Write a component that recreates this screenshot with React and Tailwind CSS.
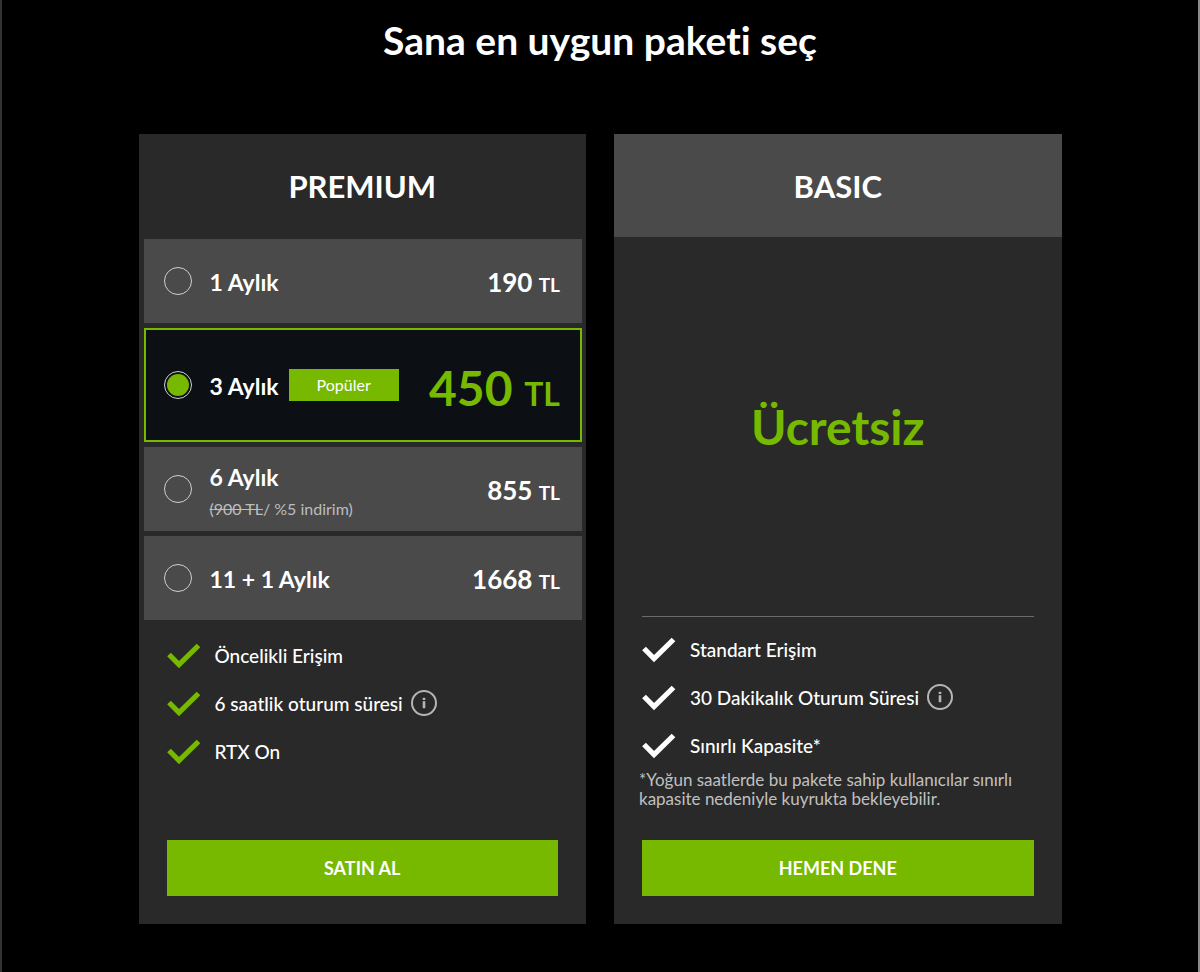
import { useState } from "react";

const plans = [
  { id: "m1", label: "1 Aylık", price: "190" },
  { id: "m3", label: "3 Aylık", price: "450", badge: "Popüler" },
  { id: "m6", label: "6 Aylık", price: "855", oldPrice: "900 TL", discount: "%5 indirim" },
  { id: "m12", label: "11 + 1 Aylık", price: "1668" },
];

function CheckIcon({ className }) {
  return (
    <svg viewBox="0 0 34 26" className={"h-[26px] w-[34px] shrink-0 " + className} aria-hidden="true">
      <path d="M2 11.5 L12 21.5 L31.5 2.5" fill="none" stroke="currentColor" strokeWidth="5.2" />
    </svg>
  );
}

function InfoButton() {
  return (
    <button type="button" aria-label="Bilgi" className="ml-2 shrink-0 text-[#b5b5b5]">
      <svg viewBox="0 0 28 28" className="block size-7" aria-hidden="true">
        <circle cx="13" cy="13" r="12" fill="none" stroke="currentColor" strokeWidth="2" />
        <rect x="11.7" y="7.8" width="2.6" height="2.2" fill="currentColor" />
        <rect x="11.7" y="11.2" width="2.6" height="7" fill="currentColor" />
      </svg>
    </button>
  );
}

function Feature({ children, info, tone }) {
  return (
    <li className="flex h-12 items-center">
      <CheckIcon className={tone} />
      <span className="ml-[14px] text-[19px] leading-6 font-medium text-white">{children}</span>
      {info && <InfoButton />}
    </li>
  );
}

function PlanOption({ plan, selected, onSelect }) {
  return (
    <label
      className={
        "flex cursor-pointer items-center pr-[22px] pl-5 " +
        (selected ? "h-[114px] bg-[#0c1015] outline-2 -outline-offset-2 outline-[#76b900]" : "h-[84px] bg-[#4a4a4a]")
      }
    >
      <input
        type="radio"
        name="plan"
        checked={selected}
        onChange={onSelect}
        className="size-7 shrink-0 appearance-none rounded-full border border-[#cfcfcf] bg-clip-content p-[2px] checked:bg-[#76b900]"
      />
      <span className={"ml-[18px] flex flex-col " + (plan.oldPrice ? "pt-2" : "pt-px")}>
        <span className="text-[23px] leading-8 font-bold text-white">{plan.label}</span>
        {plan.oldPrice && (
          <span className="text-[16px] leading-8 text-[#bdbdbd]">
            <s>({plan.oldPrice}</s>/ {plan.discount})
          </span>
        )}
      </span>
      {plan.badge && (
        <span className="ml-[10px] bg-[#76b900] px-7 py-1 text-[16px] leading-6 text-white">{plan.badge}</span>
      )}
      <span
        className={
          "ml-auto font-bold whitespace-nowrap " +
          (selected ? "pt-3 text-[48px] leading-[60px] text-[#76b900]" : "pt-1 text-[26px] leading-8 text-white")
        }
      >
        {plan.price} <span className={selected ? "text-[32px]" : "text-[19px]"}>TL</span>
      </span>
    </label>
  );
}

function ActionButton({ children }) {
  return (
    <div className="mt-auto px-7 pb-7">
      <button type="button" className="h-14 w-full bg-[#76b900] text-[18px] font-bold text-white">
        {children}
      </button>
    </div>
  );
}

export default function App() {
  const [selected, setSelected] = useState("m3");
  return (
    <div className="min-h-screen border-r-2 border-l-2 border-r-[#8a8a8a] border-l-[#333333] bg-black pb-12 font-['Lato',sans-serif] [font-variant-ligatures:none]">
      <h1 className="pt-4 text-center text-[39px] leading-[48px] font-bold text-white">Sana en uygun paketi seç</h1>
      <main className="mx-auto mt-[70px] grid max-w-[923px] grid-cols-2 gap-7">
        <section className="flex min-h-[790px] flex-col bg-[#292929]">
          <h2 className="py-[33px] text-center text-[31px] leading-[39px] font-bold text-white">PREMIUM</h2>
          <div role="radiogroup" aria-label="PREMIUM" className="flex flex-col gap-[5px] pr-1 pl-[5px]">
            {plans.map((plan) => (
              <PlanOption
                key={plan.id}
                plan={plan}
                selected={selected === plan.id}
                onSelect={() => setSelected(plan.id)}
              />
            ))}
          </div>
          <ul className="px-7 pt-3">
            <Feature tone="text-[#76b900]">Öncelikli Erişim</Feature>
            <Feature tone="text-[#76b900]" info>
              6 saatlik oturum süresi
            </Feature>
            <Feature tone="text-[#76b900]">RTX On</Feature>
          </ul>
          <ActionButton>SATIN AL</ActionButton>
        </section>
        <section className="flex min-h-[790px] flex-col bg-[#292929]">
          <h2 className="bg-[#4a4a4a] pt-[33px] pb-[31px] text-center text-[31px] leading-[39px] font-bold text-white">BASIC</h2>
          <p className="flex h-[379px] items-center justify-center text-[48px] font-bold text-[#76b900]">Ücretsiz</p>
          <ul className="mx-7 border-t border-[#6a6a6a] pt-[9px]">
            <Feature tone="text-white">Standart Erişim</Feature>
            <Feature tone="text-white" info>
              30 Dakikalık Oturum Süresi
            </Feature>
            <Feature tone="text-white">Sınırlı Kapasite*</Feature>
          </ul>
          <p className="pr-4 pl-[25px] text-[17px] leading-[19px] text-[#c0c0c0]">
            *Yoğun saatlerde bu pakete sahip kullanıcılar sınırlı kapasite nedeniyle kuyrukta bekleyebilir.
          </p>
          <ActionButton>HEMEN DENE</ActionButton>
        </section>
      </main>
    </div>
  );
}
